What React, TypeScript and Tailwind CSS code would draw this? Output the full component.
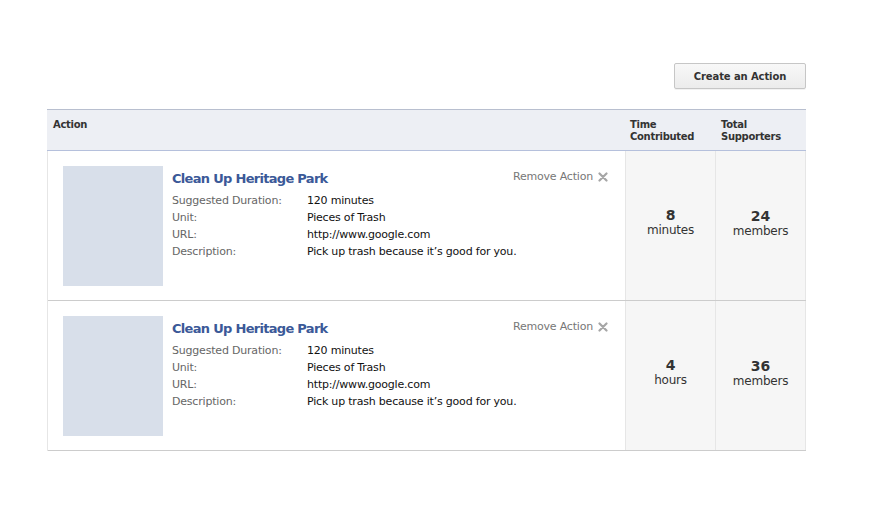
import React from 'react';

type Action = {
  title: string;
  duration: string;
  unit: string;
  url: string;
  description: string;
  time: string;
  timeUnit: string;
  supporters: string;
};

const actions: Action[] = [
  {
    title: 'Clean Up Heritage Park',
    duration: '120 minutes',
    unit: 'Pieces of Trash',
    url: 'http://www.google.com',
    description: 'Pick up trash because it’s good for you.',
    time: '8',
    timeUnit: 'minutes',
    supporters: '24',
  },
  {
    title: 'Clean Up Heritage Park',
    duration: '120 minutes',
    unit: 'Pieces of Trash',
    url: 'http://www.google.com',
    description: 'Pick up trash because it’s good for you.',
    time: '4',
    timeUnit: 'hours',
    supporters: '36',
  },
];

function CloseIcon() {
  return (
    <svg width="10" height="10" viewBox="0 0 10 10" className="ml-[5px]">
      <path d="M1.5 1.5 L8.5 8.5 M8.5 1.5 L1.5 8.5" stroke="#a6a6a6" strokeWidth="2.2" strokeLinecap="round" />
    </svg>
  );
}

function ActionRow({ action }: { action: Action }) {
  const details: [string, string][] = [
    ['Suggested Duration:', action.duration],
    ['Unit:', action.unit],
    ['URL:', action.url],
    ['Description:', action.description],
  ];

  return (
    <div className="flex border-b border-[#cccccc]">
      {/* Action info */}
      <div className="flex flex-1 pb-[14px] pl-[15px] pr-[17px] pt-[15px]">
        <div className="h-[120px] w-[100px] shrink-0 bg-[#d8dfea]" />
        <div className="ml-[9px] flex-1">
          <div className="mt-[5px] flex items-start justify-between">
            <h3 className="text-[13px] font-bold leading-[16px] tracking-[-0.7px] text-[#3b5998]">{action.title}</h3>
            <button className="-mt-[2px] flex items-center text-[11px] leading-[16px] tracking-[-0.2px] text-[#777777]">
              Remove Action
              <CloseIcon />
            </button>
          </div>
          <div className="mt-[5px] text-[11px] leading-[17px] tracking-[-0.2px]">
            {details.map(([label, value]) => (
              <div key={label} className="flex">
                <span className="w-[135px] shrink-0 text-[#666666]">{label}</span>
                <span className="text-[#111111]">{value}</span>
              </div>
            ))}
          </div>
        </div>
      </div>

      {/* Stats */}
      <div className="flex w-[90px] flex-col items-center justify-center border-l border-[#e6e6e6] bg-[#f6f6f6] pb-[6px] text-[#333333]">
        <span className="text-[14px] font-bold leading-[16px]">{action.time}</span>
        <span className="text-[12px] leading-[15px] tracking-[-0.2px]">{action.timeUnit}</span>
      </div>
      <div className="flex w-[91px] flex-col items-center justify-center border-x border-[#e6e6e6] bg-[#f6f6f6] pb-[4px] text-[#333333]">
        <span className="text-[14px] font-bold leading-[16px]">{action.supporters}</span>
        <span className="text-[12px] leading-[15px] tracking-[-0.2px]">members</span>
      </div>
    </div>
  );
}

export default function App() {
  return (
    <div className="min-h-[528px] w-[894px] bg-white pl-[47px] pt-[63px] font-['DejaVu_Sans',sans-serif]">
      <div className="w-[759px]">
        <div className="flex justify-end">
          <button className="h-[26px] w-[132px] rounded-[2px] border border-[#c6c6c6] bg-gradient-to-b from-[#f8f8f8] to-[#ececec] pt-[1px] text-[10px] font-bold tracking-[-0.1px] text-[#333333] shadow-[0_1px_0_rgba(0,0,0,0.05)]">
            Create an Action
          </button>
        </div>

        <div className="mt-[20px]">
          {/* Header */}
          <div className="flex h-[42px] border-y border-[#b8bfcf] border-b-[#b5c0dc] bg-[#edeff4] text-[10px] font-bold leading-[12px] tracking-[-0.3px] text-[#333333]">
            <div className="flex-1 px-[6px] pt-[9px]">Action</div>
            <div className="w-[90px] px-[5px] pt-[9px]">
              Time
              <br />
              Contributed
            </div>
            <div className="w-[91px] px-[6px] pt-[9px]">
              Total
              <br />
              Supporters
            </div>
          </div>

          <div className="border-l border-[#e6e6e6]">
            {actions.map((a, i) => (
              <ActionRow key={i} action={a} />
            ))}
          </div>
        </div>
      </div>
    </div>
  );
}
